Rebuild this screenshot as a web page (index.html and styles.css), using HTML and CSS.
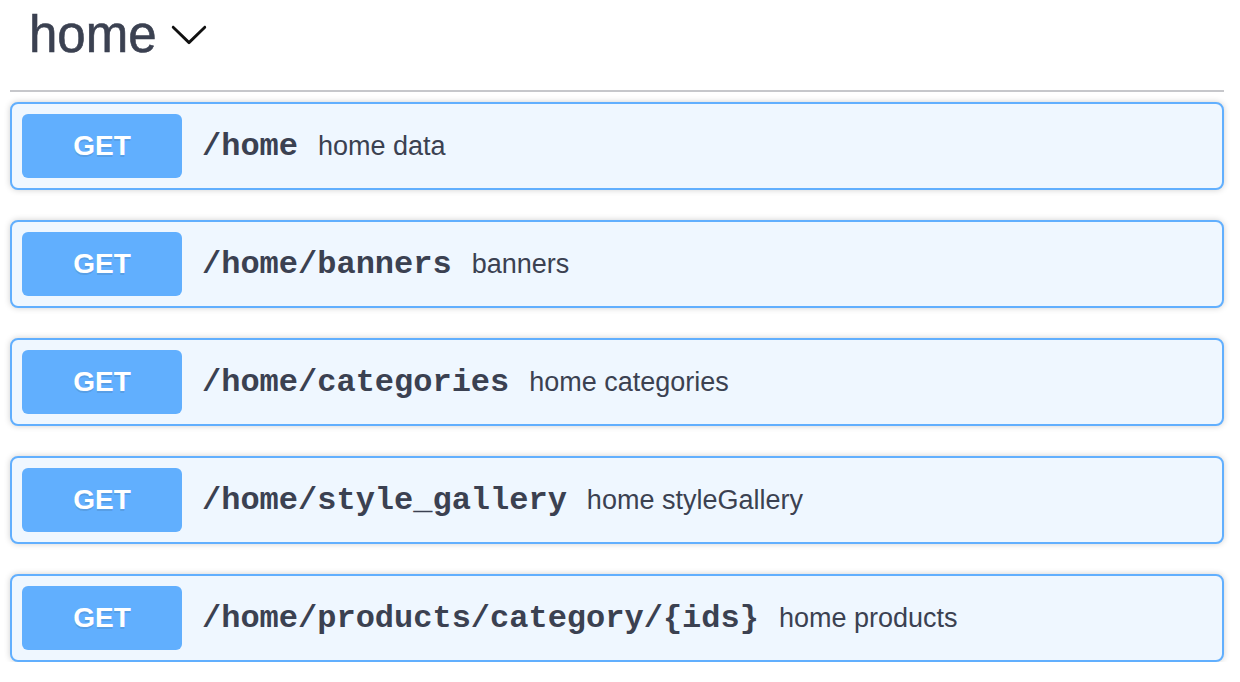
FILE: index.html
```html
<!DOCTYPE html>
<html lang="en">
<head>
<meta charset="utf-8">
<title>home</title>
<link rel="stylesheet" href="styles.css">
</head>
<body>
<div class="tag-section">
  <h4 class="tag-title">
    <span class="tag-name">home</span>
    <svg class="tag-arrow" viewBox="0 0 20 20" width="40" height="40" aria-hidden="true"><path d="M17.418 6.109c.272-.268.709-.268.979 0s.271.701 0 .969l-7.908 7.83c-.27.268-.707.268-.979 0l-7.908-7.830c-.27-.268-.27-.701 0-.969.271-.268.709-.268.979 0L10 13.25l7.418-7.141z"/></svg>
  </h4>
  <div class="ops">
    <div class="op"><span class="method">GET</span><span class="path">/home</span><span class="desc">home data</span></div>
    <div class="op"><span class="method">GET</span><span class="path">/home/banners</span><span class="desc">banners</span></div>
    <div class="op"><span class="method">GET</span><span class="path">/home/categories</span><span class="desc">home categories</span></div>
    <div class="op"><span class="method">GET</span><span class="path">/home/style_gallery</span><span class="desc">home styleGallery</span></div>
    <div class="op"><span class="method">GET</span><span class="path">/home/products/category/{ids}</span><span class="desc">home products</span></div>
  </div>
</div>
</body>
</html>
```
FILE: styles.css
```css
html, body {
  margin: 0;
  padding: 0;
  background: #ffffff;
}
body {
  font-family: "Liberation Sans", Arial, sans-serif;
  color: #3b4151;
}
.tag-section {
  padding: 0 16px 0 10px;
}
.tag-title {
  display: flex;
  align-items: center;
  margin: 0 0 10px 0;
  padding: 10px 40px 30px 19px;
  border-bottom: 2px solid #c6c7cb;
  font-size: 51px;
  line-height: 50px;
  font-weight: 400;
  color: #3b4151;
  -webkit-text-stroke: 0.6px #3b4151;
}
.tag-arrow {
  display: block;
  margin-left: 12px;
  margin-top: -3px;
  fill: #111111;
}
.ops {
  display: flex;
  flex-direction: column;
  gap: 30px;
}
.op {
  display: flex;
  align-items: center;
  height: 88px;
  box-sizing: border-box;
  padding: 10px;
  border: 2px solid #61affe;
  border-radius: 8px;
  background: #eff7ff;
  box-shadow: 0 0 6px rgba(0, 0, 0, 0.19);
}
.method {
  display: block;
  width: 160px;
  height: 64px;
  line-height: 64px;
  text-align: center;
  background: #61affe;
  border-radius: 6px;
  color: #ffffff;
  font-weight: 700;
  font-size: 28px;
  text-shadow: 0 2px 0 rgba(0, 0, 0, 0.1);
}
.path {
  padding: 0 20px;
  font-family: "Liberation Mono", "Courier New", monospace;
  font-weight: 700;
  font-size: 32px;
  color: #3b4151;
}
.desc {
  font-size: 27px;
  color: #3b4151;
}
```
